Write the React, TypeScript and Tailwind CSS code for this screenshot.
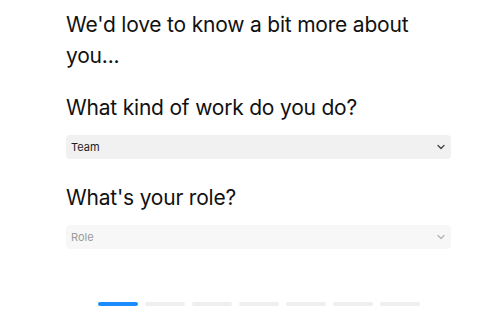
import React from "react";

const STEPS = 7;

function Chevron({ muted }: { muted?: boolean }) {
  return (
    <svg
      width="8"
      height="6"
      viewBox="0 0 8 6"
      fill="none"
      className={muted ? "text-[#b5b5b5]" : "text-[#444]"}
    >
      <path d="M1 1.5L4 4.5L7 1.5" stroke="currentColor" strokeWidth="1.3" strokeLinecap="round" strokeLinejoin="round" />
    </svg>
  );
}

function SelectBox({ value, placeholder }: { value?: string; placeholder: string }) {
  return (
    <div
      className={`flex items-center justify-between h-6 rounded-[4px] pl-[5px] pr-[6px] ${
        value ? "bg-[#f1f1f1]" : "bg-[#f7f7f7]"
      }`}
    >
      <span className={`text-[11px] ${value ? "text-[#222]" : "text-[#9a9a9a]"}`}>
        {value ?? placeholder}
      </span>
      <Chevron muted={!value} />
    </div>
  );
}

export default function App() {
  return (
    <div className="w-[500px] h-[324px] bg-white font-['Inter',sans-serif] text-[#111] overflow-hidden">
      <div className="pl-[66px] w-[451px] pt-[9px] flex flex-col">
        <h1 className="text-[21px] leading-[31px] font-normal tracking-[-0.2px]">
          We'd love to know a bit more about you...
        </h1>

        <h2 className="mt-[21px] text-[21px] leading-[31px] font-normal tracking-[-0.2px]">
          What kind of work do you do?
        </h2>
        <div className="mt-[12px]">
          <SelectBox value="Team" placeholder="Team" />
        </div>

        <h2 className="mt-[23px] text-[21px] leading-[31px] font-normal tracking-[-0.2px]">
          What's your role?
        </h2>
        <div className="mt-[12px]">
          <SelectBox placeholder="Role" />
        </div>
      </div>

      <div className="mt-[53px] flex justify-center gap-[7px] pl-[18px]">
        {Array.from({ length: STEPS }).map((_, i) => (
          <div
            key={i}
            className={`w-[40px] h-[4px] rounded-full ${i === 0 ? "bg-[#1a8cff]" : "bg-[#efefef]"}`}
          />
        ))}
      </div>
    </div>
  );
}
